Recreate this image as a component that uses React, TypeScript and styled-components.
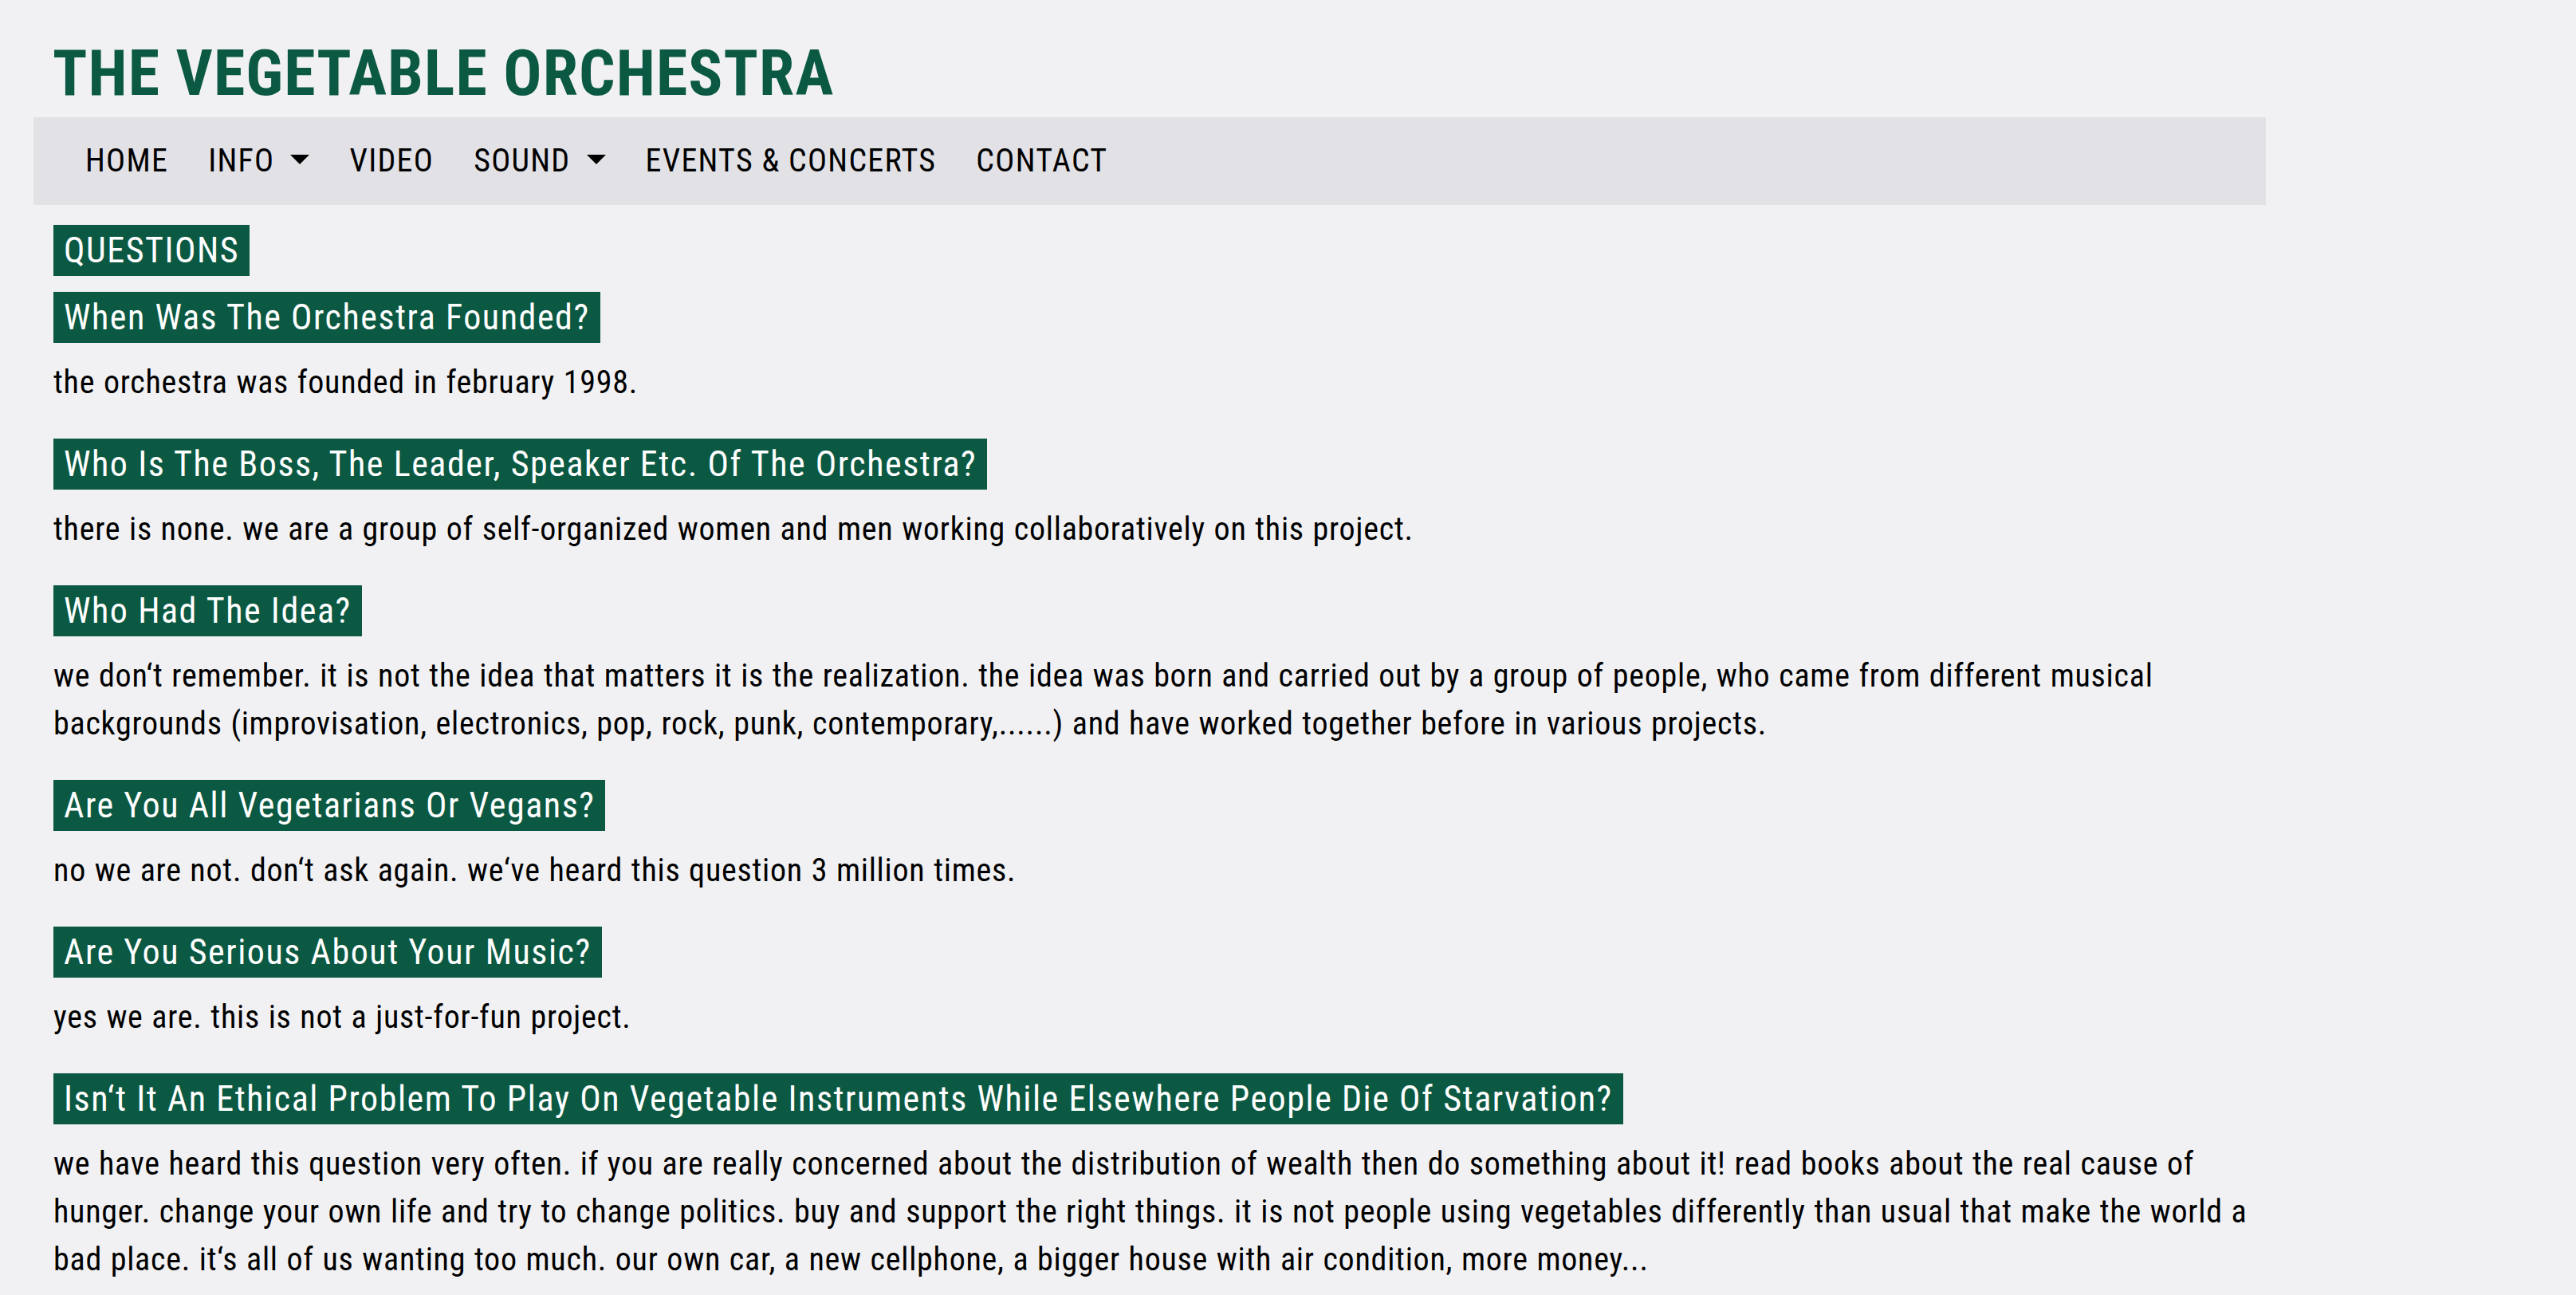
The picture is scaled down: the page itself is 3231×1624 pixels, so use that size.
import React from "react";
import styled, { createGlobalStyle } from "styled-components";

const GREEN = "#0b5943";

const GlobalStyle = createGlobalStyle`
  html, body {
    margin: 0;
    padding: 0;
    background: #f1f1f3;
  }
  body {
    font-family: "Roboto Condensed", "Liberation Sans", Arial, sans-serif;
    color: #000;
  }
  * { box-sizing: border-box; }
`;

const Page = styled.div`
  width: 2800px;
  margin-left: 42px;
`;

const Title = styled.h1`
  margin: 44px 0 7px 24px;
  font-size: 80px;
  line-height: 96px;
  font-weight: 700;
  letter-spacing: 1.1px;
  color: ${GREEN};
  text-transform: uppercase;
`;

const NavBar = styled.nav`
  height: 110px;
  background: #e2e1e6;
  display: flex;
  align-items: center;
  padding-left: 40px;
`;

const NavList = styled.ul`
  display: flex;
  align-items: center;
  list-style: none;
  margin: 0;
  padding: 0;
`;

const NavLink = styled.a`
  display: flex;
  align-items: center;
  padding: 0 25px;
  font-size: 40px;
  line-height: 60px;
  letter-spacing: 1.3px;
  color: #000;
  text-decoration: none;
  text-transform: uppercase;
  cursor: pointer;
`;

const Caret = styled.span`
  display: inline-block;
  margin-left: 20px;
  margin-bottom: 5px;
  width: 0;
  height: 0;
  border-top: 12px solid #000;
  border-left: 12px solid transparent;
  border-right: 12px solid transparent;
`;

const Main = styled.main`
  padding: 25px 0 0 25px;
`;

const Heading = styled.h2`
  display: table;
  margin: 0 0 20px;
  padding: 6px 13px;
  background: ${GREEN};
  color: #fff;
  font-size: 44px;
  line-height: 52px;
  font-weight: 400;
  letter-spacing: 1.55px;
`;

const Answer = styled.p`
  margin: 0 0 40px;
  font-size: 40px;
  line-height: 60px;
  letter-spacing: 0.75px;
  word-spacing: 0.8px;
`;

const nav: { label: string; dropdown?: boolean }[] = [
  { label: "Home" },
  { label: "Info", dropdown: true },
  { label: "Video" },
  { label: "Sound", dropdown: true },
  { label: "Events & Concerts" },
  { label: "Contact" },
];

const faq: { q: string; a: string }[] = [
  { q: "When Was The Orchestra Founded?", a: "the orchestra was founded in february 1998." },
  {
    q: "Who Is The Boss, The Leader, Speaker Etc. Of The Orchestra?",
    a: "there is none. we are a group of self-organized women and men working collaboratively on this project.",
  },
  {
    q: "Who Had The Idea?",
    a: "we don\u2018t remember. it is not the idea that matters it is the realization. the idea was born and carried out by a group of people, who came from different musical backgrounds (improvisation, electronics, pop, rock, punk, contemporary,......) and have worked together before in various projects.",
  },
  {
    q: "Are You All Vegetarians Or Vegans?",
    a: "no we are not. don\u2018t ask again. we\u2018ve heard this question 3 million times.",
  },
  { q: "Are You Serious About Your Music?", a: "yes we are. this is not a just-for-fun project." },
  {
    q: "Isn\u2018t It An Ethical Problem To Play On Vegetable Instruments While Elsewhere People Die Of Starvation?",
    a: "we have heard this question very often. if you are really concerned about the distribution of wealth then do something about it! read books about the real cause of hunger. change your own life and try to change politics. buy and support the right things. it is not people using vegetables differently than usual that make the world a bad place. it\u2018s all of us wanting too much. our own car, a new cellphone, a bigger house with air condition, more money...",
  },
];

export default function App() {
  return (
    <>
      <GlobalStyle />
      <Page>
        <Title>The Vegetable Orchestra</Title>
        <NavBar>
          <NavList>
            {nav.map((n) => (
              <li key={n.label}>
                <NavLink>
                  {n.label}
                  {n.dropdown && <Caret />}
                </NavLink>
              </li>
            ))}
          </NavList>
        </NavBar>
        <Main>
          <Heading>QUESTIONS</Heading>
          {faq.map((f) => (
            <section key={f.q}>
              <Heading as="h3">{f.q}</Heading>
              <Answer>{f.a}</Answer>
            </section>
          ))}
        </Main>
      </Page>
    </>
  );
}
